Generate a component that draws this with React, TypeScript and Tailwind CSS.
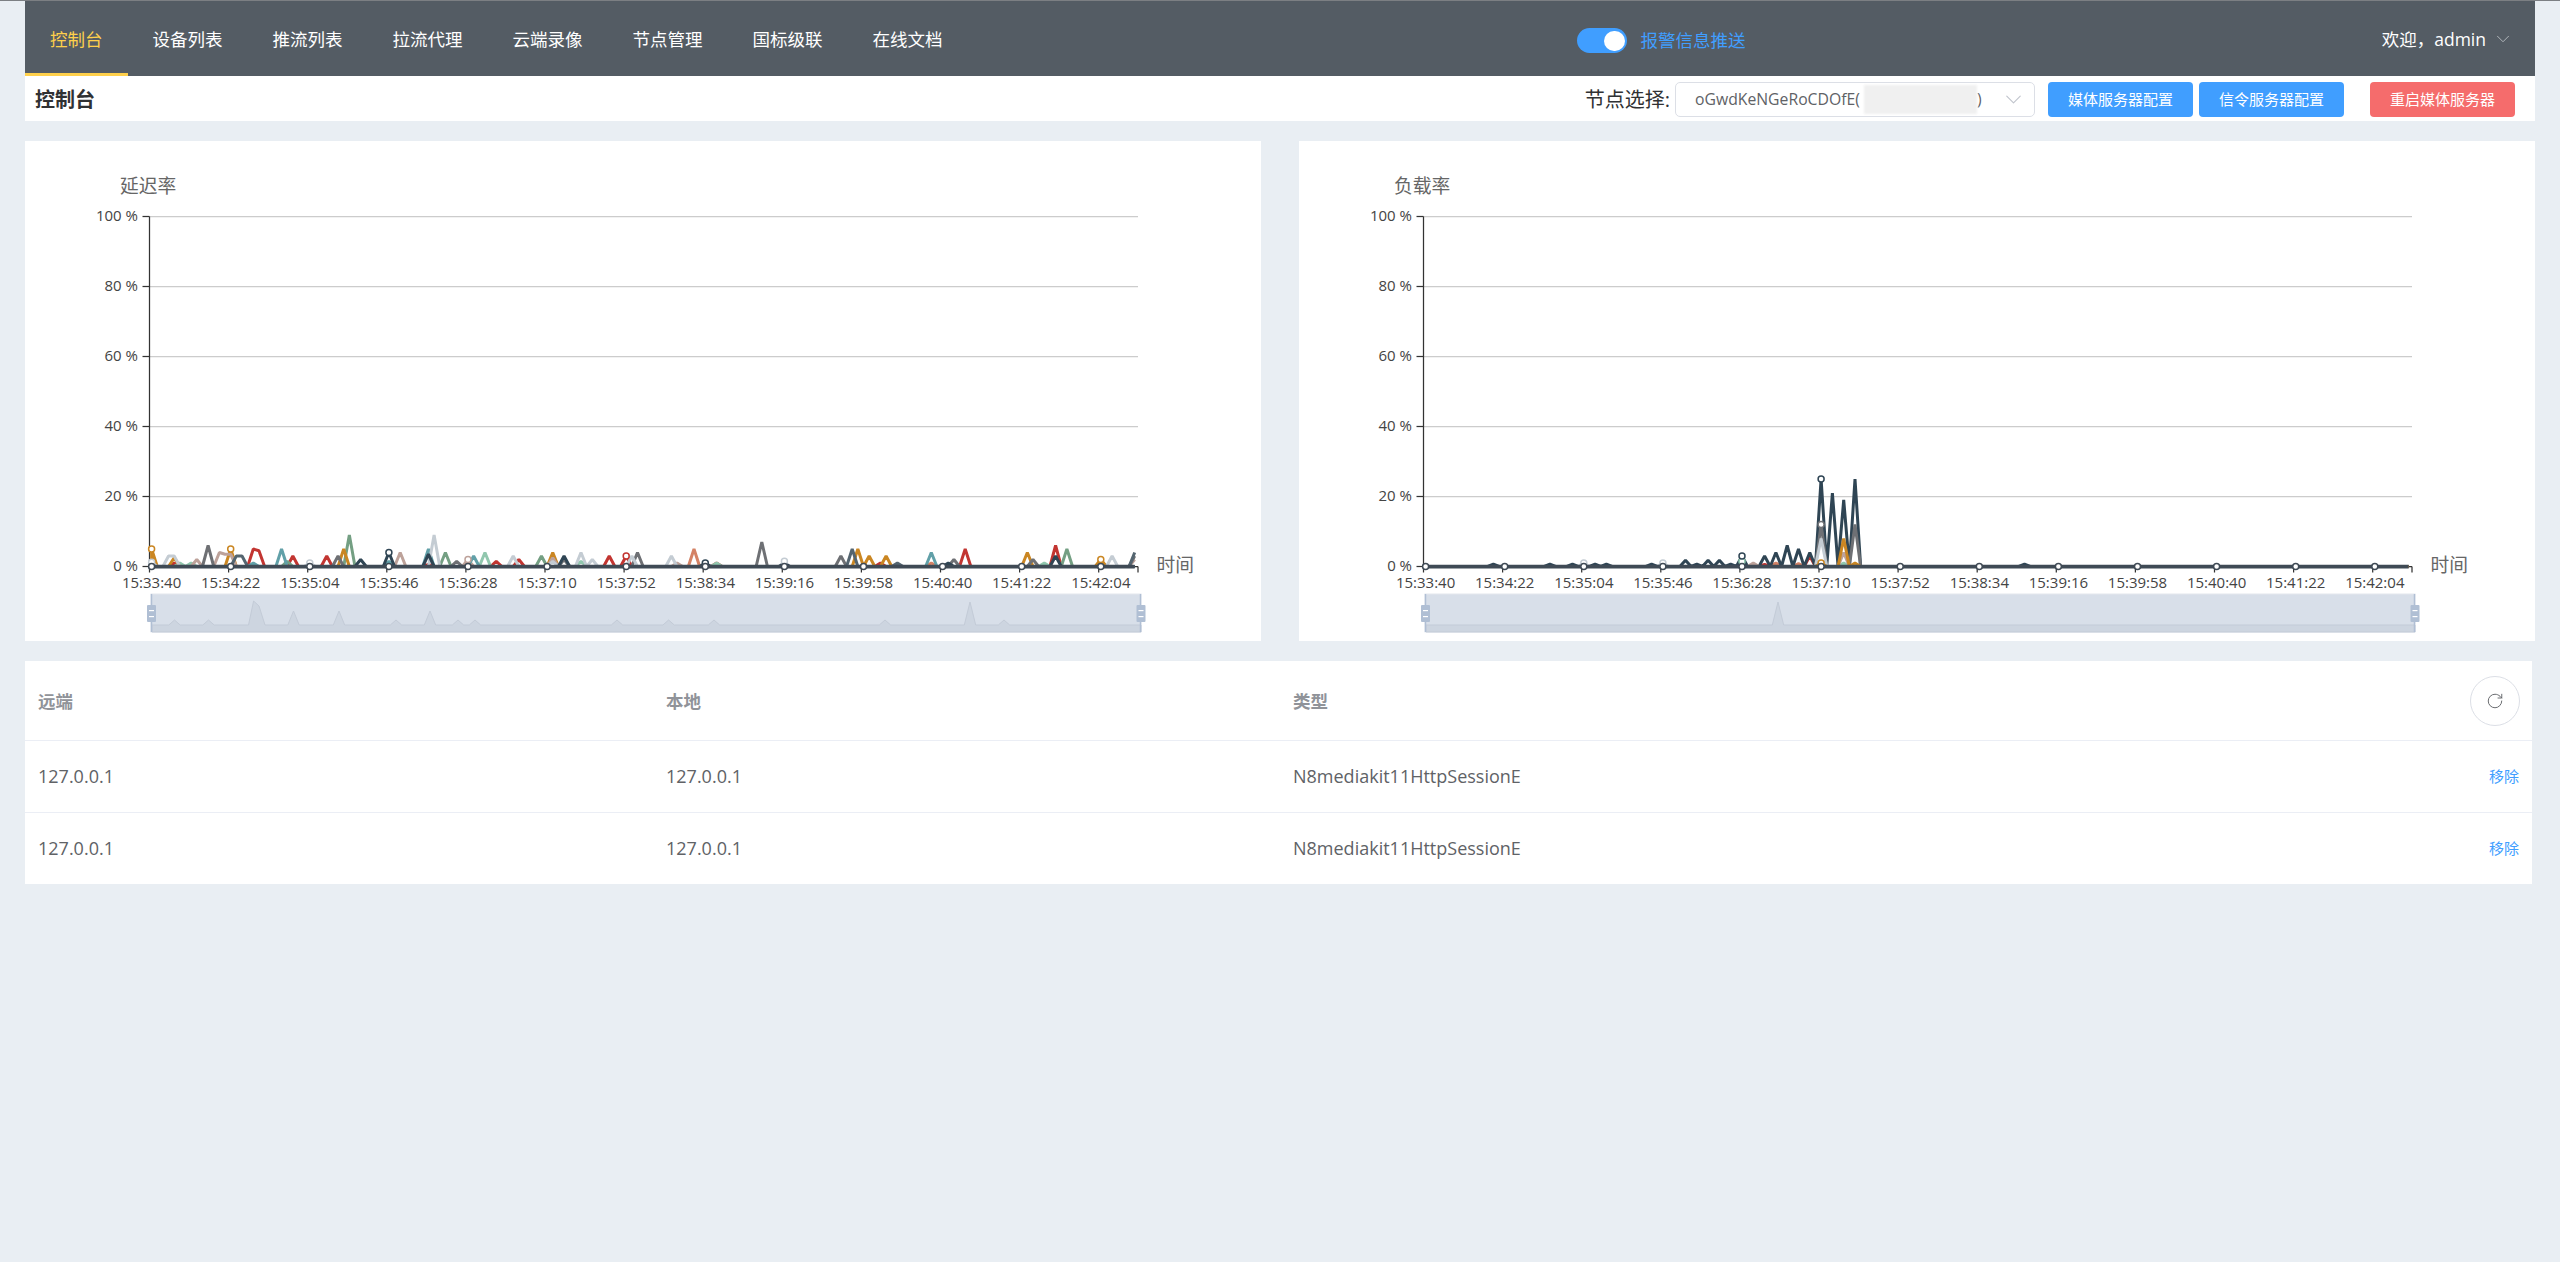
import { ChevronDown, RotateCw } from "lucide-react";

const menu = ["控制台", "设备列表", "推流列表", "拉流代理", "云端录像", "节点管理", "国标级联", "在线文档"];

const times = [
  "15:33:40", "15:34:22", "15:35:04", "15:35:46", "15:36:28", "15:37:10", "15:37:52",
  "15:38:34", "15:39:16", "15:39:58", "15:40:40", "15:41:22", "15:42:04",
];

type Spike = [number, number];
type Series = { color: string; spikes: Spike[]; marks?: [number, number][] };

// chart geometry, in px from the card's left/top corner
const AXIS_X = 124.5;
const FIRST_X = 126.6;
const STEP = 11.3;
const TOP = 75.5;
const BASE = 425.5;
const PER_PCT = 3.5;
const LAST = 87;
const baseMarks: [number, number][] = [0, 7, 14, 21, 28, 35, 42, 49, 56, 63, 70, 77, 84].map((i) => [i, 0]);

const px = (i: number) => FIRST_X + i * STEP;
const py = (v: number) => BASE - v * PER_PCT;

function linePath(spikes: Spike[]) {
  const sorted = [...spikes].sort((a, b) => a[0] - b[0]);
  let d = `M${px(0)} ${py(0)}`;
  sorted.forEach(([p, v], n) => {
    const prev = sorted[n - 1];
    if (p > 0 && (!prev || p - prev[0] >= 1)) d += ` L${px(p - 0.5)} ${py(0)}`;
    d += ` L${px(p)} ${py(v)}`;
    const next = sorted[n + 1];
    if (p < LAST && (!next || next[0] - p >= 1)) d += ` L${px(p + 0.5)} ${py(0)}`;
  });
  if (!sorted.length || sorted[sorted.length - 1][0] < LAST) d += ` L${px(LAST)} ${py(0)}`;
  return d;
}

const delaySeries: Series[] = [
  {
    color: "#c23531",
    spikes: [[2, 1], [9, 5], [9.5, 4.5], [12.5, 3], [15.5, 3], [24.5, 0.6], [30.5, 1.5], [32.5, 2], [40.5, 3], [42, 3], [64.5, 1], [72, 5], [80, 6], [50, 1]],
    marks: [[42, 3]],
  },
  { color: "#d48265", spikes: [[48, 5], [69, 1]] },
  { color: "#91c7ae", spikes: [[2.5, 1], [3.5, 1], [29.5, 4], [38, 1.5], [50, 1], [79, 1]] },
  { color: "#749f83", spikes: [[12, 1.5], [17.5, 9], [26, 4], [34.5, 3], [81, 5]] },
  {
    color: "#ca8622",
    spikes: [[0, 5], [2, 2.5], [7, 5], [17, 5], [35.5, 4], [62.5, 5], [63.5, 3], [65, 3], [77.5, 4], [84, 2]],
    marks: [[0, 5], [7, 5], [84, 2]],
  },
  {
    color: "#bda29a",
    spikes: [[4, 2], [6, 4], [6.5, 3.5], [7, 3.5], [22, 4], [28, 2], [35.5, 2.5], [46.5, 1], [87, 2]],
    marks: [[28, 2]],
  },
  { color: "#61a0a8", spikes: [[9, 1], [11.5, 5], [21, 1.5], [24.5, 5], [28.5, 3], [69, 4]] },
  { color: "#6e7074", spikes: [[5, 6], [16.5, 3], [27, 1.5], [36.5, 2], [43, 4], [54, 7], [61, 3], [71, 2], [78, 2], [87, 3]] },
  {
    color: "#c4ccd3",
    spikes: [[0, 1.2], [1.5, 3], [2, 3], [14, 1], [25, 9], [32, 3], [35.5, 1.5], [38, 4], [39, 2], [42.5, 3], [46, 3], [85, 3]],
    marks: [[0, 1.2], [14, 1], [56, 1.5]],
  },
  { color: "#546570", spikes: [[7.5, 3], [8, 3], [62, 5], [66, 1], [87, 4]] },
  {
    color: "#2f4554",
    spikes: [[18.5, 2], [21, 4], [24.5, 3.5], [36.5, 3], [49, 1], [56, 1], [80, 3], [70.5, 1]],
    marks: [[21, 4], [49, 1]],
  },
  { color: "#3f4a55", spikes: [], marks: baseMarks },
];

const loadSeries: Series[] = [
  { color: "#c23531", spikes: [[30, 0.6], [34, 3]] },
  { color: "#d48265", spikes: [[31, 1], [33, 0.8]] },
  { color: "#91c7ae", spikes: [[28, 1.5], [37, 1]], marks: [[28, 1.5]] },
  { color: "#2f4554", spikes: [
      [6, 0.7], [11, 0.7], [13, 0.7], [15, 0.7], [16, 0.7], [20, 0.7], [23, 1.8], [24, 0.7], [25, 1.8], [26, 1.8], [27, 0.7],
      [28, 3], [30, 3], [31, 4], [32, 6], [33, 5], [34, 4], [35, 25], [36, 21], [37, 19], [38, 25], [53, 0.7],
    ],
    marks: [[28, 3], [35, 25]],
  },
  { color: "#bda29a", spikes: [[29, 1], [37, 4]] },
  { color: "#6e7074", spikes: [[35, 12], [38, 12]], marks: [[35, 12]] },
  { color: "#c4ccd3", spikes: [[14, 1], [21, 1], [35, 8]], marks: [[14, 1], [21, 1]] },
  { color: "#ca8622", spikes: [[35, 1], [37, 8], [38, 1]], marks: [[35, 1]] },
  { color: "#3f4a55", spikes: [], marks: baseMarks },
];

const delayMini: Spike[] = [
  [149.5, 5], [183.5, 5], [268.5, 14], [314, 14], [371, 5], [405, 14], [433, 5], [450, 5], [592, 5], [643.6, 5], [689, 5], [860, 5], [945, 23], [979, 5],
];

function miniPath(spikes: Spike[], extra: [number, number][] = []) {
  const base = 484;
  const pts = [...spikes.map(([x, h]) => [[x - 5.7, 0], [x, h], [x + 5.7, 0]]).flat(), ...extra]
    .sort((a, b) => a[0] - b[0]);
  return `M127 ${base} ` + pts.map(([x, h]) => `L${x} ${base - h}`).join(" ") + ` L1116 ${base}`;
}

function Handle({ x }: { x: number }) {
  return (
    <g>
      <rect x={x - 4.5} y={464} width={9} height={17} rx={1} fill="#b0bfd4" />
      <rect x={x - 2.5} y={469} width={5} height={1.2} fill="#fff" />
      <rect x={x - 2.5} y={475} width={5} height={1.2} fill="#fff" />
    </g>
  );
}

function Chart({ title, series, mini, extra }: { title: string; series: Series[]; mini: Spike[]; extra?: [number, number][] }) {
  const d = miniPath(mini, extra);
  return (
    <div className="flex-1 h-[500px] bg-white">
      <svg width="1236" height="500" className="block" fontFamily="'Open Sans','Noto Sans CJK SC',sans-serif">
        <text x={95} y={52} fontSize="18.75" fill="#666" fontFamily="'Noto Sans CJK SC',sans-serif">
          {title}
        </text>
        {[100, 80, 60, 40, 20, 0].map((v) => (
          <g key={v}>
            {v > 0 && <line x1={AXIS_X} x2={1113} y1={py(v)} y2={py(v)} stroke="#ccc" strokeWidth="1.25" />}
            <line x1={AXIS_X - 7} x2={AXIS_X} y1={py(v)} y2={py(v)} stroke="#333" strokeWidth="1.25" />
            <text x={113} y={py(v) + 4} fontSize="15" fill="#444" textAnchor="end">
              {v} %
            </text>
          </g>
        ))}
        <line x1={AXIS_X} x2={AXIS_X} y1={TOP} y2={BASE} stroke="#333" strokeWidth="1.25" />
        <line x1={AXIS_X} x2={1113} y1={BASE} y2={BASE} stroke="#333" strokeWidth="1.25" />
        {times.map((t, i) => (
          <g key={t}>
            <line x1={AXIS_X + i * 79.1} x2={AXIS_X + i * 79.1} y1={BASE} y2={BASE + 6} stroke="#333" strokeWidth="1.25" />
            <text x={px(i * 7)} y={BASE + 21.5} fontSize="15" fill="#444" textAnchor="middle">
              {t}
            </text>
          </g>
        ))}
        <line x1={1113} x2={1113} y1={BASE} y2={BASE + 6} stroke="#333" strokeWidth="1.25" />
        <text x={1131.5} y={BASE + 5} fontSize="18.75" fill="#666" fontFamily="'Noto Sans CJK SC',sans-serif">
          时间
        </text>
        {series.map((s) => (
          <path
            key={s.color}
            d={linePath(s.spikes)}
            fill="none"
            stroke={s.color}
            strokeWidth={s.spikes.length ? 3 : 3.75}
            strokeLinejoin="bevel"
          />
        ))}
        {series.map((s) =>
          (s.marks ?? []).map(([i, v]) => (
            <circle key={s.color + i} cx={px(i)} cy={py(v)} r="3" fill="#fff" stroke={s.color} strokeWidth="1.5" />
          ))
        )}
        {/* data zoom slider */}
        <rect x={126} y={453} width={990} height={38} fill="#d8dfe9" stroke="#e3e7ee" strokeWidth="1" />
        <path d={`${d} L1116 491 L127 491 Z`} fill="#cdd5e0" stroke="#c3cbd7" strokeWidth="1" />
        <line x1={126.5} x2={126.5} y1={453} y2={491} stroke="#b0bfd4" strokeWidth="1.5" />
        <line x1={1115.5} x2={1115.5} y1={453} y2={491} stroke="#b0bfd4" strokeWidth="1.5" />
        <Handle x={126.5} />
        <Handle x={1116} />
      </svg>
    </div>
  );
}

const rows = [1, 2];

export default function App() {
  return (
    <div className="min-h-screen border-t border-[#7c7f83] bg-[#e9eef3] px-[25px] font-['Open_Sans','Noto_Sans_CJK_SC',sans-serif]">
      {/* Top menu */}
      <div className="flex items-center h-[75px] bg-[#545c64] text-[17.5px] text-white">
        {menu.map((m, i) => (
          <div
            key={m}
            className={
              i === 0
                ? "flex items-center h-full pt-[4px] px-[25px] text-[#ffd04b] border-b-[3px] border-[#ffd04b]"
                : "flex items-center h-full pt-[4px] px-[25px] border-b-[3px] border-transparent"
            }
          >
            {m}
          </div>
        ))}
        <div className="flex items-center gap-[14px] ml-[609px] mt-[4px]">
          <div className="flex items-center justify-end w-[50px] h-[25px] rounded-full bg-[#409eff] pr-[2px]">
            <div className="w-[21px] h-[20px] rounded-full bg-white" />
          </div>
          <span className="text-[#409eff]">报警信息推送</span>
        </div>
        <div className="flex items-center ml-auto pr-[21px] mt-[1px]">
          欢迎，admin
          <ChevronDown className="ml-[6px] text-[#b8bcc2]" size={22} strokeWidth={1} />
        </div>
      </div>

      {/* Sub header */}
      <div className="flex items-center h-[45px] pt-[2px] bg-white pl-[10px] pr-[20px]">
        <div className="text-[20px] font-bold text-[#303133]">控制台</div>
        <div className="ml-auto text-[20px] text-[#303133]">节点选择:</div>
        <div className="flex items-center justify-between w-[360px] h-[35px] ml-[5px] pl-[19px] pr-[7px] rounded-[5px] border border-[#dcdfe6] text-[15.75px] text-[#606266]">
          <span className="flex items-center">
            oGwdKeNGeRoCDOfE(
            <span className="w-[113px] h-[29px] ml-[4px] bg-[#f0f0f0] blur-[1px]" />)
          </span>
          <ChevronDown className="text-[#c0c4cc]" size={27} strokeWidth={1} />
        </div>
        <button className="w-[145px] h-[35px] ml-[13px] rounded-[4px] bg-[#409eff] text-[15px] text-white">媒体服务器配置</button>
        <button className="w-[145px] h-[35px] ml-[6px] rounded-[4px] bg-[#409eff] text-[15px] text-white">信令服务器配置</button>
        <button className="w-[145px] h-[35px] ml-[26px] rounded-[4px] bg-[#f56c6c] text-[15px] text-white">重启媒体服务器</button>
      </div>

      {/* Charts */}
      <div className="flex gap-[38px] mt-[20px]">
        <Chart title="延迟率" series={delaySeries} mini={delayMini} extra={[[223.5, 0], [228.6, 24], [234, 19], [240, 0]]} />
        <Chart title="负载率" series={loadSeries} mini={[[479, 23]]} />
      </div>

      {/* Session table */}
      <div className="mt-[20px] mr-[3px] bg-white">
        <div className="flex items-center h-[80px] border-b border-[#ebeef5] text-[17.5px] font-bold text-[#909399]">
          <div className="w-[630px] pl-[13px] pt-[2px]">远端</div>
          <div className="w-[627px] pl-[11px] pt-[2px]">本地</div>
          <div className="flex-1 pl-[11px] pt-[2px]">类型</div>
          <button className="flex items-center justify-center w-[50px] h-[50px] mr-[12px] rounded-full border border-[#dcdfe6] text-[#606266]">
            <RotateCw size={18} strokeWidth={1.25} />
          </button>
        </div>
        {rows.map((r) => (
          <div key={r} className="flex items-center h-[72px] last:h-[71px] border-b border-[#ebeef5] last:border-b-0 text-[18px] text-[#606266]">
            <div className="w-[630px] pl-[13px]">127.0.0.1</div>
            <div className="w-[627px] pl-[11px]">127.0.0.1</div>
            <div className="flex-1 pl-[11px]">N8mediakit11HttpSessionE</div>
            <button className="mr-[13px] text-[15px] text-[#409eff]">移除</button>
          </div>
        ))}
      </div>
    </div>
  );
}
